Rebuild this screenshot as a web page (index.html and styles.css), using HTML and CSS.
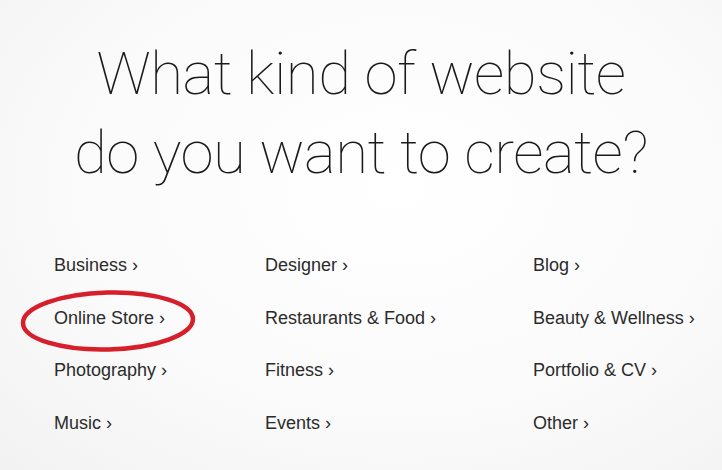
FILE: index.html
```html
<html>
<head>
<title>Choose a website type</title>
<link rel="stylesheet" href="styles.css">
</head>
<body>
<div class="page">
    <h1 class="title">What kind of website<br>do you want to create?</h1>
    <div class="kinds">
        <a class="kind">Business &rsaquo;</a>
        <a class="kind">Designer &rsaquo;</a>
        <a class="kind">Blog &rsaquo;</a>
        <a class="kind circled">Online Store &rsaquo;
            <svg class="ring" width="180" height="66" viewBox="0 0 180 66">
                <ellipse cx="90" cy="32" rx="85" ry="28.5" transform="rotate(-1.5 90 32)" fill="none" stroke="#d61f2b" stroke-width="4.5"/>
            </svg>
        </a>
        <a class="kind">Restaurants &amp; Food &rsaquo;</a>
        <a class="kind">Beauty &amp; Wellness &rsaquo;</a>
        <a class="kind">Photography &rsaquo;</a>
        <a class="kind">Fitness &rsaquo;</a>
        <a class="kind">Portfolio &amp; CV &rsaquo;</a>
        <a class="kind">Music &rsaquo;</a>
        <a class="kind">Events &rsaquo;</a>
        <a class="kind">Other &rsaquo;</a>
    </div>
</div>
</body>
</html>
```

FILE: styles.css
```css
body
{
    margin: 0;
    background: radial-gradient(ellipse at 55% 40%, #ffffff 0%, #fafafa 60%, #f2f2f2 100%);
    height: 470px;
    overflow: hidden;
}
.page
{
    padding-top: 34px;
}
.title
{
    margin: 0;
    text-align: center;
    font-family: Roboto, "Liberation Sans", sans-serif;
    font-weight: 100;
    font-size: 60px;
    line-height: 79px;
    color: #1a1a1a;
    letter-spacing: -0.5px;
}
.kinds
{
    display: grid;
    grid-template-columns: 211px 268px auto;
    grid-auto-rows: 52.5px;
    padding-left: 54px;
    margin-top: 63px;
}
.kind
{
    position: relative;
    font-family: "Liberation Sans", Arial, sans-serif;
    font-size: 18px;
    color: #2b2b2b;
    cursor: pointer;
}
.ring
{
    position: absolute;
    left: -36px;
    top: -19px;
}
```
